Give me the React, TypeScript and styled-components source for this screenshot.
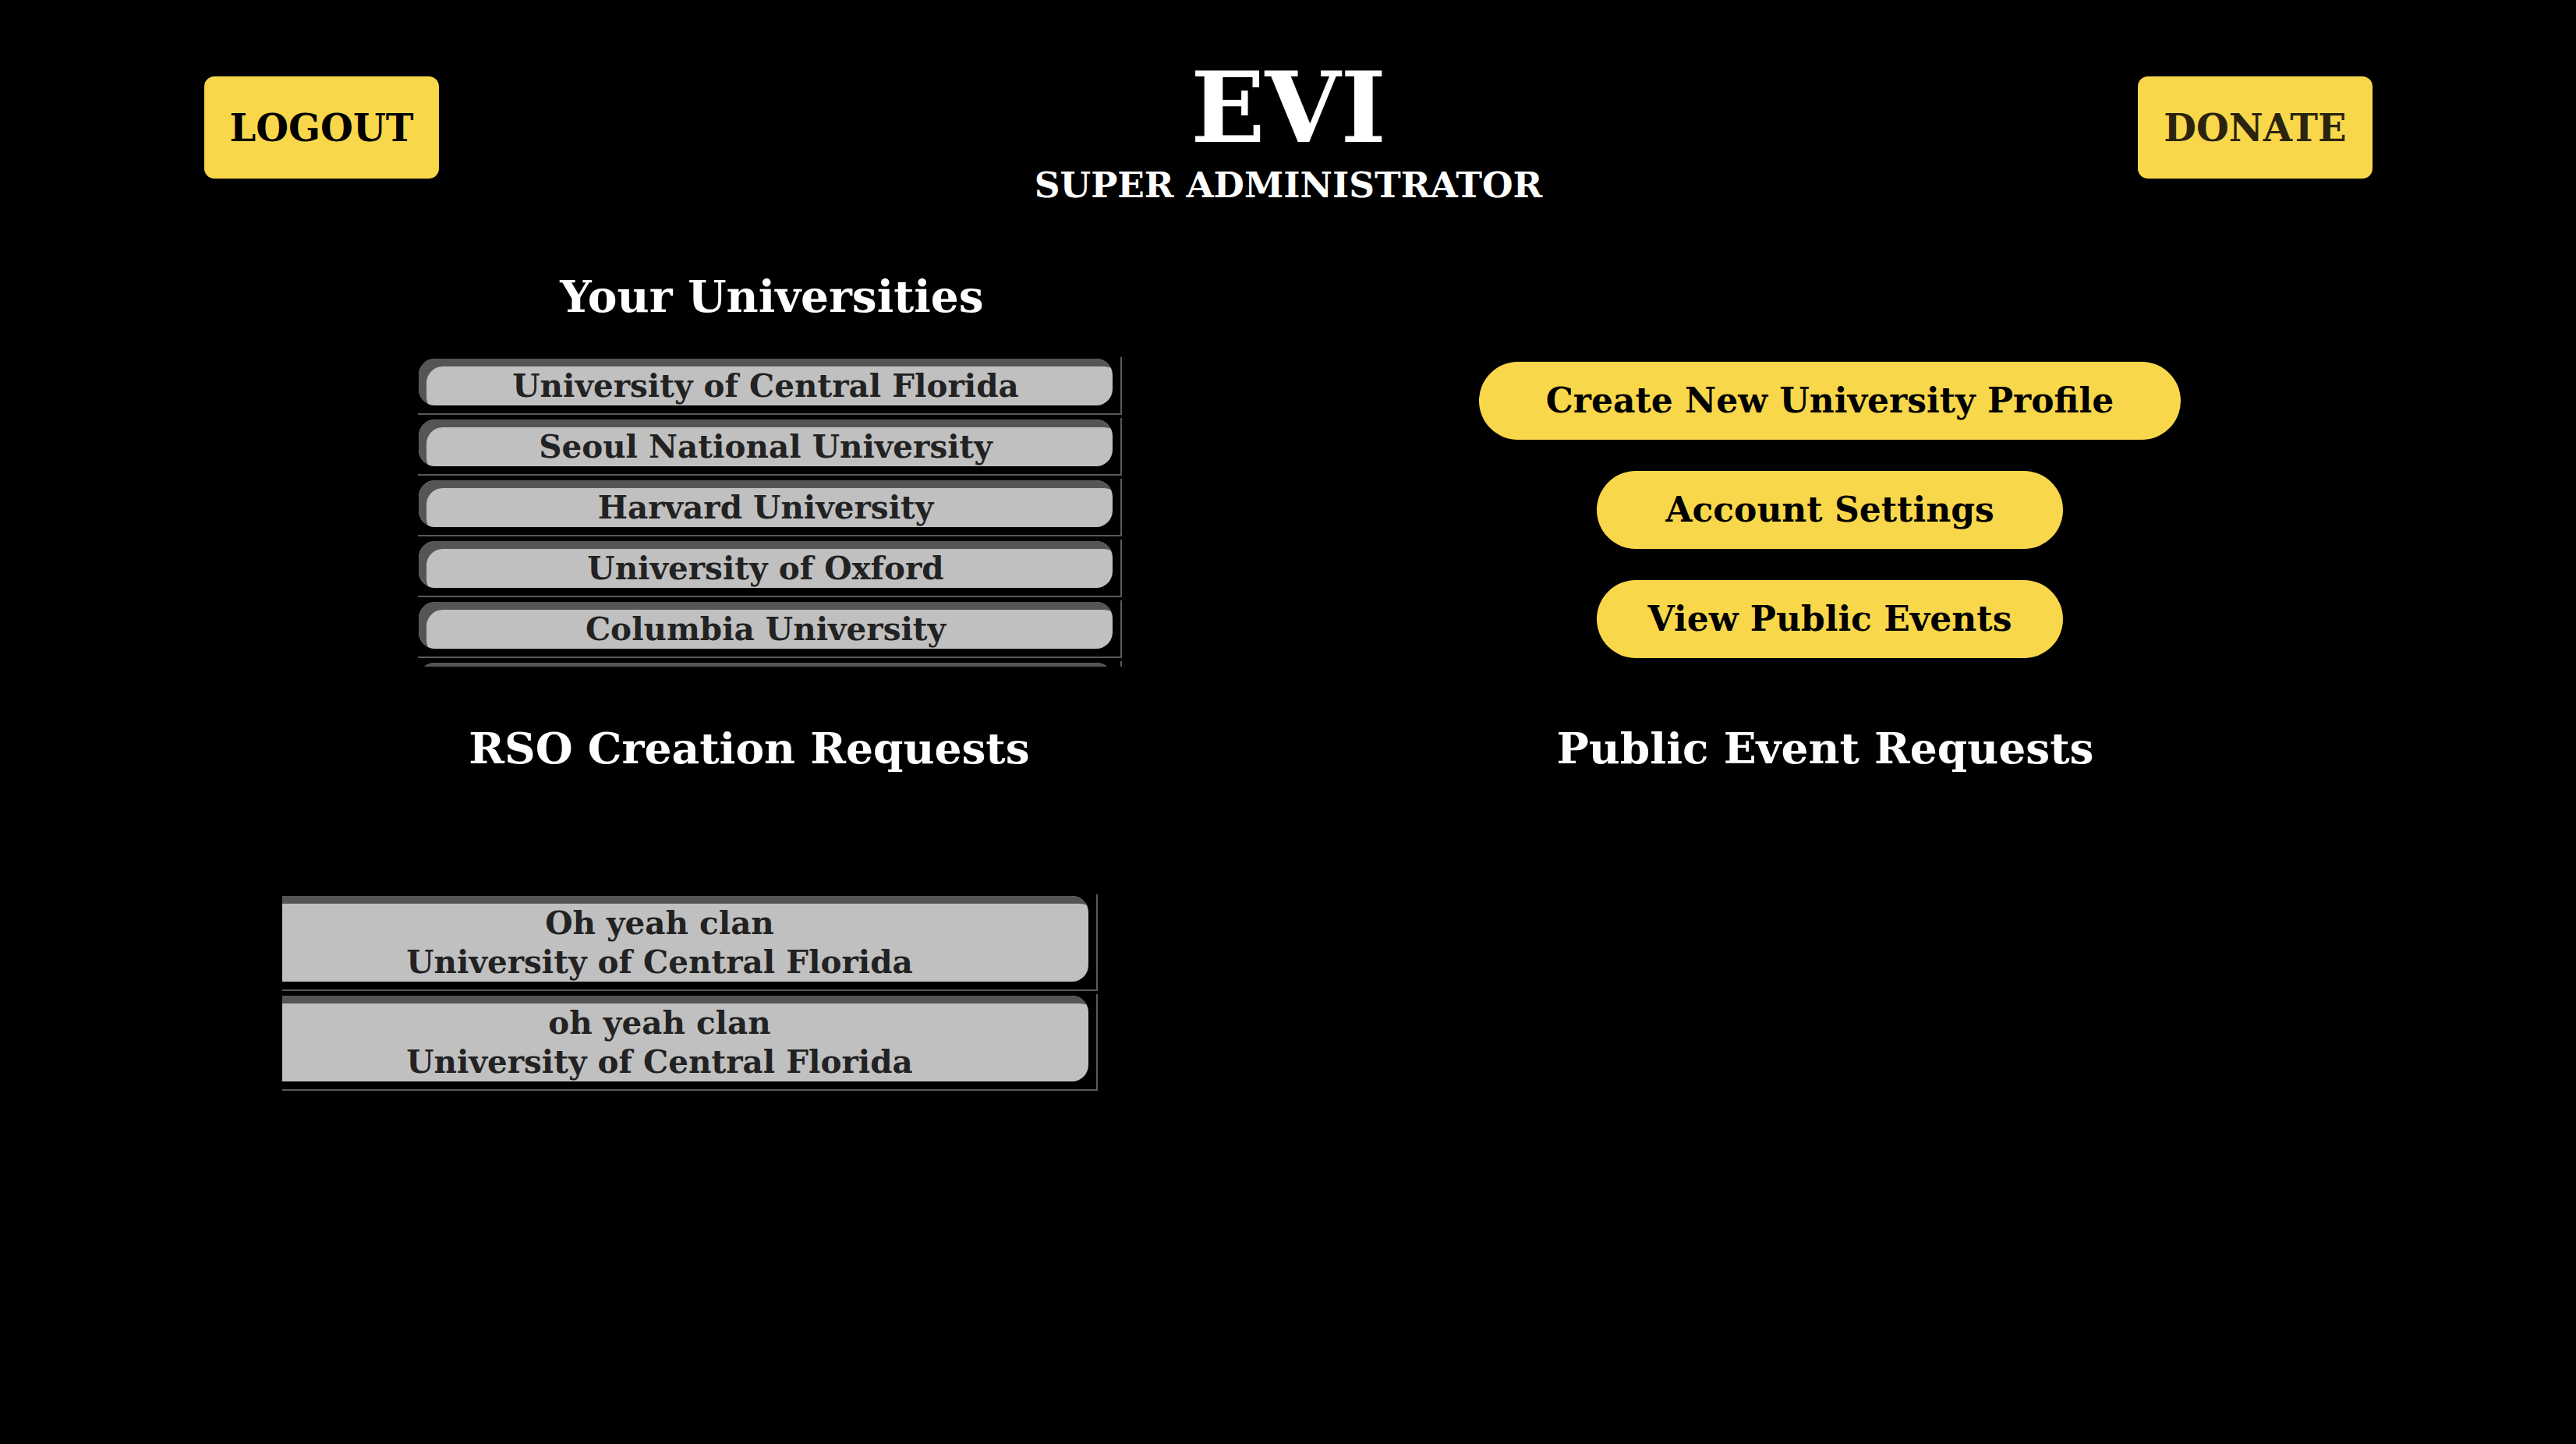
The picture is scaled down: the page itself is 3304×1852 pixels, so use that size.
import React from 'react';
import styled, { createGlobalStyle } from 'styled-components';

const GlobalStyle = createGlobalStyle`
  html, body {
    margin: 0;
    padding: 0;
    background: #000;
  }
  body {
    font-family: "DejaVu Serif", "Liberation Serif", serif;
    font-weight: bold;
  }
  * { box-sizing: border-box; }
`;

const YELLOW = '#f9d74b';

const Page = styled.div`
  width: 3304px;
  min-height: 1852px;
  background: #000;
`;

const Header = styled.header`
  display: flex;
  justify-content: space-between;
  align-items: flex-start;
  padding: 76px 261px 0 262px;
`;

const CornerButton = styled.button<{ $muted?: boolean }>`
  margin-top: 22px;
  width: 301px;
  height: 131px;
  border: none;
  border-radius: 13px;
  background: ${YELLOW};
  color: ${(p) => (p.$muted ? '#2a240e' : '#000')};
  font-family: inherit;
  font-weight: bold;
  font-size: 48px;
  line-height: 1;
  display: flex;
  align-items: center;
  justify-content: center;
  padding: 0;
  cursor: pointer;
`;

const TitleBlock = styled.div`
  display: flex;
  flex-direction: column;
  align-items: center;
  color: #fff;
`;

const Title = styled.h1`
  margin: 0;
  font-size: 125px;
  line-height: 1;
  font-weight: bold;
`;

const Subtitle = styled.div`
  margin-top: 14px;
  font-size: 45.4px;
  line-height: 1;
`;

const Main = styled.main`
  display: grid;
  grid-template-columns: 1400px 1314px;
  padding-left: 290px;
  margin-top: 92px;
`;

const Heading = styled.h2<{ $size: number }>`
  margin: 0;
  color: #fff;
  font-size: ${(p) => p.$size}px;
  line-height: 1;
  font-weight: bold;
  text-align: center;
  white-space: nowrap;
`;

const UniSection = styled.section`
  display: flex;
  flex-direction: column;
  align-items: center;
`;

const UniList = styled.div`
  margin-top: 49px;
  width: 903px;
  height: 397px;
  overflow: hidden;
  margin-left: -5px;
`;

const Row = styled.div<{ $offset?: number }>`
  padding: 2px 10px 10px 1px;
  margin-bottom: 4px;
  border-right: 2px solid #5a5a5a;
  border-bottom: 2px solid #5a5a5a;
  margin-left: ${(p) => (p.$offset ? -p.$offset : 0)}px;
`;

const Pill = styled.div<{ $h: number }>`
  height: ${(p) => p.$h}px;
  padding-top: 10px;
  border-radius: 21px;
  background: #c0c0c0;
  box-shadow: inset 10px 10px 0 #555;
  color: #222;
  font-size: 40.5px;
  line-height: 50px;
  text-align: center;
  white-space: nowrap;
`;

const ActionColumn = styled.div`
  display: flex;
  flex-direction: column;
  align-items: center;
  gap: 40px;
  align-self: end;
  padding-top: 6px;
  padding-bottom: 11px;
`;

const ActionButton = styled.button<{ $w: number }>`
  width: ${(p) => p.$w}px;
  height: 100px;
  border: none;
  border-radius: 50px;
  background: ${YELLOW};
  color: #000;
  font-family: inherit;
  font-weight: bold;
  font-size: 44px;
  line-height: 1;
  padding: 0;
  cursor: pointer;
`;

const RsoSection = styled.section`
  grid-column: 1;
  padding: 0 130px 0 72px;
  margin-top: 77px;
`;

const RsoList = styled.div`
  margin-top: 160px;
  width: 1046px;
  overflow: hidden;
`;

const PublicSection = styled.section`
  grid-column: 2;
  margin-top: 77px;
  padding-right: 12px;
`;

const universities = [
  'University of Central Florida',
  'Seoul National University',
  'Harvard University',
  'University of Oxford',
  'Columbia University',
  'University of Tokyo',
];

const rsoRequests = [
  { name: 'Oh yeah clan', uni: 'University of Central Florida' },
  { name: 'oh yeah clan', uni: 'University of Central Florida' },
];

export default function App() {
  return (
    <Page>
      <GlobalStyle />
      <Header>
        <CornerButton>LOGOUT</CornerButton>
        <TitleBlock>
          <Title>EVI</Title>
          <Subtitle>SUPER ADMINISTRATOR</Subtitle>
        </TitleBlock>
        <CornerButton $muted>DONATE</CornerButton>
      </Header>
      <Main>
        <UniSection>
          <Heading $size={56.6}>Your Universities</Heading>
          <UniList>
            {universities.map((u) => (
              <Row key={u}>
                <Pill $h={60}>{u}</Pill>
              </Row>
            ))}
          </UniList>
        </UniSection>
        <ActionColumn>
          <ActionButton $w={900}>Create New University Profile</ActionButton>
          <ActionButton $w={598}>Account Settings</ActionButton>
          <ActionButton $w={598}>View Public Events</ActionButton>
        </ActionColumn>
        <RsoSection>
          <Heading $size={55}>RSO Creation Requests</Heading>
          <RsoList>
            {rsoRequests.map((r) => (
              <Row key={r.name} $offset={67}>
                <Pill $h={110}>
                  {r.name}
                  <br />
                  {r.uni}
                </Pill>
              </Row>
            ))}
          </RsoList>
        </RsoSection>
        <PublicSection>
          <Heading $size={55}>Public Event Requests</Heading>
        </PublicSection>
      </Main>
    </Page>
  );
}
